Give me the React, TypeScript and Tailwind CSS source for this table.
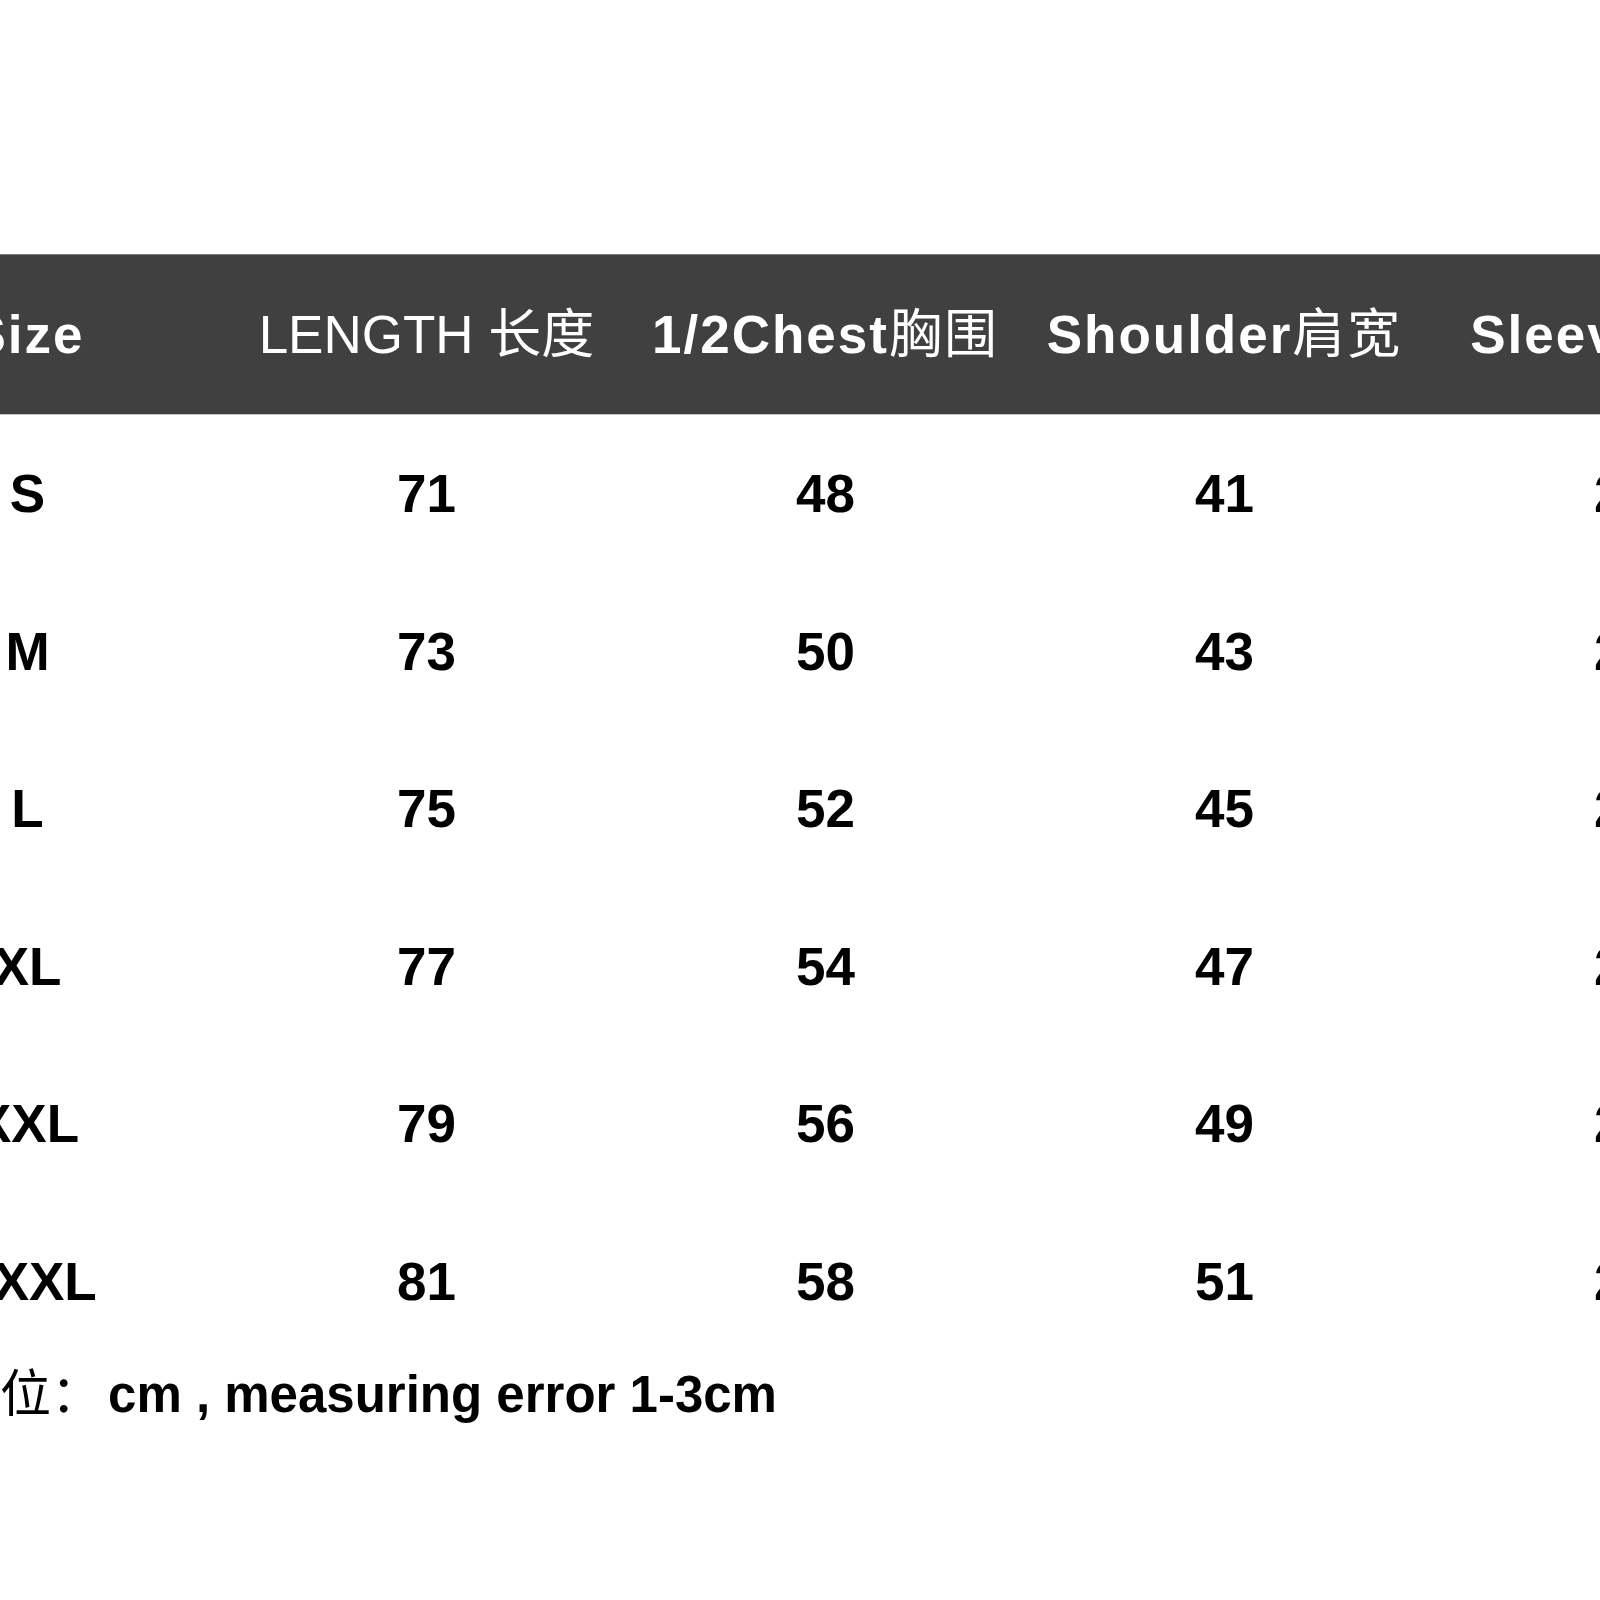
const FONT = "font-['Liberation_Sans','Noto_Sans_CJK_SC',sans-serif]"

type Head = { en: string; zh: string; bold: boolean }

const HEADERS: Head[] = [
  { en: 'Size', zh: '', bold: true },
  { en: 'LENGTH ', zh: '长度', bold: false },
  { en: '1/2Chest', zh: '胸围', bold: true },
  { en: 'Shoulder', zh: '肩宽', bold: true },
  { en: 'Sleeve ', zh: '袖长', bold: true },
]

const ROWS: [string, number, number, number, number][] = [
  ['S', 71, 48, 41, 20],
  ['M', 73, 50, 43, 21],
  ['L', 75, 52, 45, 22],
  ['XL', 77, 54, 47, 23],
  ['XXL', 79, 56, 49, 24],
  ['XXXL', 81, 58, 51, 25],
]

export default function App() {
  return (
    <div className={`w-[1600px] h-[1600px] bg-white overflow-hidden ${FONT}`}>
      <div className="pt-[254px]">
        {/* table is wider than the viewport: first and last columns are cut off */}
        <div className="-ml-[172px] w-[1995px]">
          <div className="grid grid-cols-[repeat(5,399px)] items-center h-[161px] bg-[#404040] border-t border-t-[#7a7a7a] border-b border-b-[#c4c4c4] text-white text-[53px] leading-none">
            {HEADERS.map((h) => (
              <div
                key={h.en}
                className={`text-center whitespace-nowrap ${h.bold ? 'font-bold tracking-[2px]' : 'font-normal'}`}
              >
                {h.en}
                {h.zh && <span className="font-normal">{h.zh}</span>}
              </div>
            ))}
          </div>

          {ROWS.map((r) => (
            <div
              key={r[0]}
              className="grid grid-cols-[repeat(5,399px)] items-center h-[157.5px] text-black text-[53px] font-bold leading-none"
            >
              {r.map((v, i) => (
                <div key={i} className="text-center">
                  {v}
                </div>
              ))}
            </div>
          ))}
        </div>

        <p className="mt-[9px] -ml-[51px] whitespace-nowrap text-black text-[51px] font-bold leading-none">
          <span className="font-normal">单位：</span>
          <span className="ml-[6px]">cm , measuring error 1-3cm</span>
        </p>
      </div>
    </div>
  )
}
